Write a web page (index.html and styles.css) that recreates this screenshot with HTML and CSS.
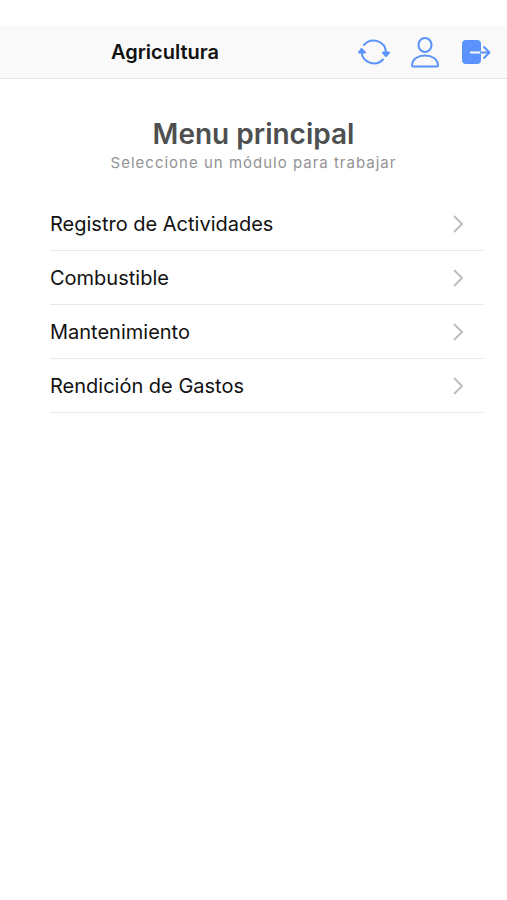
FILE: index.html
```
<!DOCTYPE html>
<html lang="es">
    <head>
        <meta charset="utf-8">
        <meta name="viewport" content="width=device-width, initial-scale=1">
        <title>Agricultura</title>
        <link rel="stylesheet" href="styles.css">
    </head>
    <body>
        <header class="toolbar">
            <h1 class="toolbar-title">Agricultura</h1>
            <div class="toolbar-buttons">
                <button class="icon-button" type="button" aria-label="Sincronizar">
                    <svg class="icon" viewBox="0 0 32 32">
                        <path class="line" d="M6 9A12.500 12.500 0 0 1 28 16v2M25 23.500A12.500 12.500 0 0 1 3.500 16v-2"/>
                        <path class="fill line" d="M25 16.500h6l-3 3.500zM1 16.500h6l-3.500-3.500z"/>
                    </svg>
                </button>
                <button class="icon-button" type="button" aria-label="Perfil">
                    <svg class="icon" viewBox="0 0 32 32">
                        <ellipse class="line" cx="16" cy="9" rx="6.500" ry="7"/>
                        <path class="line" d="M4 30.500Q3 30.500 3 29C3.500 23 9 19.500 16 19.500S28.500 23 29 29Q29 30.500 28 30.500Z"/>
                    </svg>
                </button>
                <button class="icon-button" type="button" aria-label="Salir">
                    <svg class="icon" viewBox="0 0 32 32">
                        <rect class="fill" x="2" y="4" width="19" height="24" rx="4"/>
                        <path class="gap" d="M10 16.500h11"/>
                        <path class="line" d="M21 16.500h8M24 11l5.500 5.500-5.500 5.500"/>
                    </svg>
                </button>
            </div>
        </header>
        <main class="content">
            <h2 class="title">Menu principal</h2>
            <p class="subtitle">Seleccione un módulo para trabajar</p>
            <nav class="menu">
                <a class="item" href="#actividades">
                    Registro de Actividades
                    <svg class="chevron" viewBox="0 0 12 18"><path d="M2 1l8 8-8 8"/></svg>
                </a>
                <a class="item" href="#combustible">
                    Combustible
                    <svg class="chevron" viewBox="0 0 12 18"><path d="M2 1l8 8-8 8"/></svg>
                </a>
                <a class="item" href="#mantenimiento">
                    Mantenimiento
                    <svg class="chevron" viewBox="0 0 12 18"><path d="M2 1l8 8-8 8"/></svg>
                </a>
                <a class="item" href="#gastos">
                    Rendición de Gastos
                    <svg class="chevron" viewBox="0 0 12 18"><path d="M2 1l8 8-8 8"/></svg>
                </a>
            </nav>
        </main>
    </body>
</html>
```
FILE: styles.css
```
*{
  margin:0px;
  box-sizing:border-box;
}

body{
  padding-top:26px;
  background:#fff;
  color:#111;
  font-family:"Inter", sans-serif;
}

.toolbar{
  display:flex;
  align-items:center;
  height:53px;
  background:#f9f9f9;
  border-bottom:1px solid #e4e4e4;
}

.toolbar-title{
  flex:1;
  text-align:center;
  font-size:20px;
  font-weight:600;
}

.toolbar-buttons{
  display:flex;
  padding:0px 6px 0px 18px;
}

.icon-button{
  display:flex;
  justify-content:center;
  width:51px;
  padding:0px;
  border:none;
  background:transparent;
  cursor:pointer;
}

.icon{
  width:32px;
  height:32px;
}

.line{
  fill:none;
  stroke:#5a93fc;
  stroke-width:2;
  stroke-linecap:round;
  stroke-linejoin:round;
}

.fill{
  fill:#5a93fc;
}

.gap{
  stroke:#f9f9f9;
  stroke-width:2;
}

.content{
  padding:37px 24px 0px;
}

.title{
  text-align:center;
  font-size:28px;
  line-height:36px;
  font-weight:600;
  color:#4d4f50;
}

.subtitle{
  text-align:center;
  font-size:15px;
  line-height:22px;
  letter-spacing:1px;
  color:#929395;
}

.menu{
  margin:23px 0px 0px 26px;
}

.item{
  display:flex;
  justify-content:space-between;
  align-items:center;
  height:54px;
  padding-right:19px;
  border-bottom:1px solid #e8e8e8;
  font-size:20px;
  color:#111;
  text-decoration:none;
}

.chevron{
  width:12px;
  height:18px;
  fill:none;
  stroke:#bdbdbd;
  stroke-width:2;
}
```
